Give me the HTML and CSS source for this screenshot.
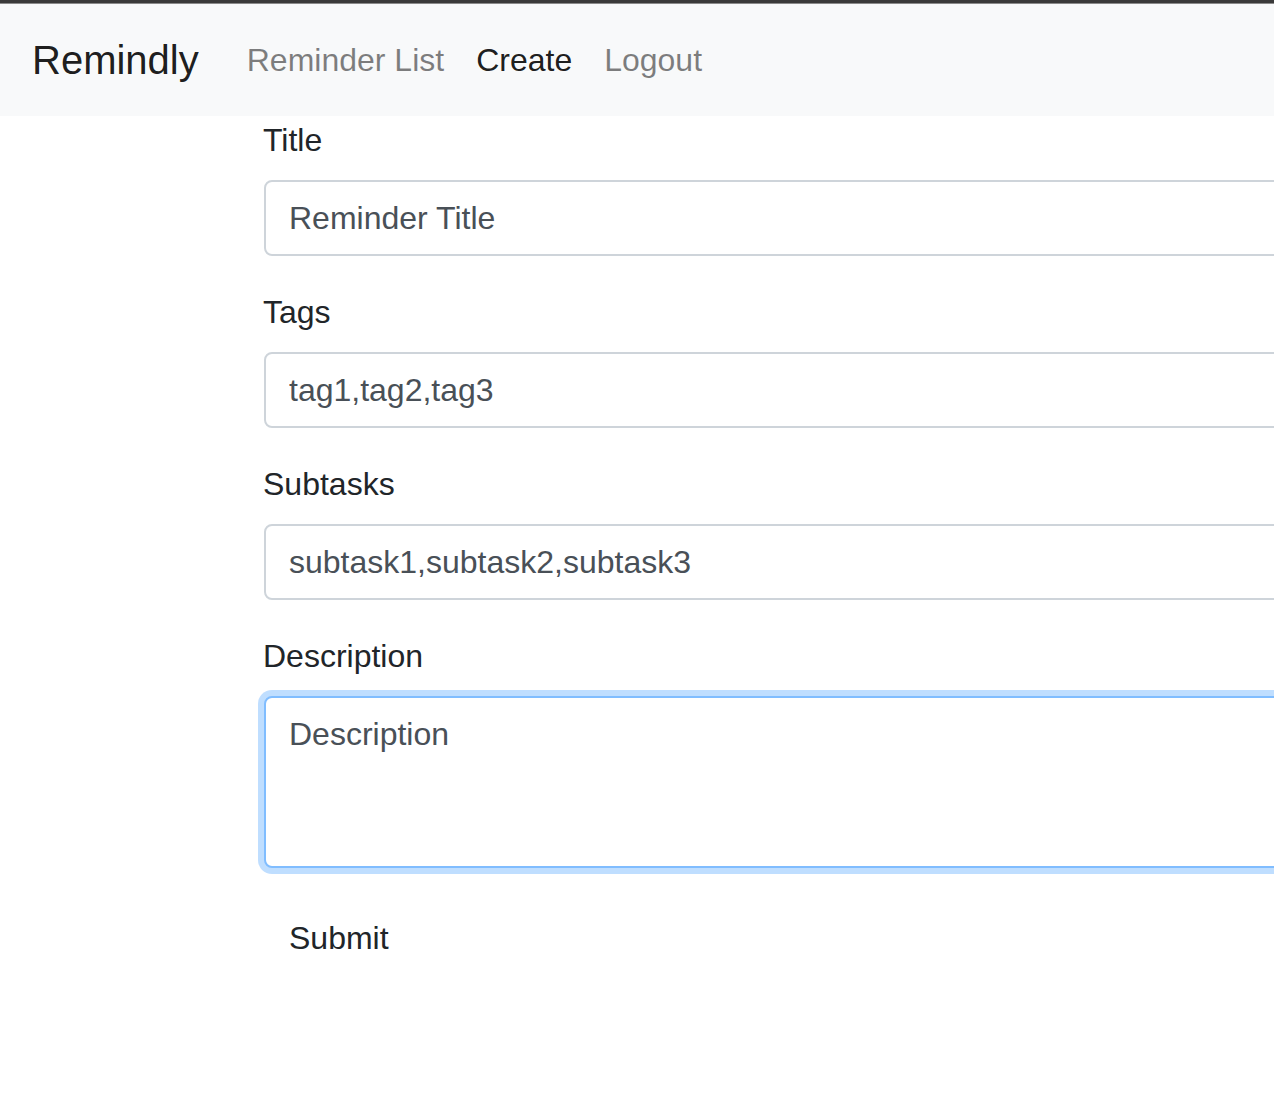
FILE: index.html
```html
<!DOCTYPE html>
<html lang="en">
<head>
<meta charset="utf-8">
<title>Remindly</title>
<link rel="stylesheet" href="styles.css">
</head>
<body>
<div class="topline"></div>
<nav class="navbar">
  <a class="brand" href="#">Remindly</a>
  <ul class="nav">
    <li><a class="nav-link" href="#">Reminder List</a></li>
    <li><a class="nav-link active" href="#">Create</a></li>
    <li><a class="nav-link" href="#">Logout</a></li>
  </ul>
</nav>
<main class="content">
  <form class="form">
    <div class="form-group">
      <label class="label" for="title">Title</label>
      <input class="control" id="title" type="text" placeholder="Reminder Title">
    </div>
    <div class="form-group">
      <label class="label" for="tags">Tags</label>
      <input class="control" id="tags" type="text" placeholder="tag1,tag2,tag3">
    </div>
    <div class="form-group">
      <label class="label" for="subtasks">Subtasks</label>
      <input class="control" id="subtasks" type="text" placeholder="subtask1,subtask2,subtask3">
    </div>
    <div class="form-group">
      <label class="label" for="desc">Description</label>
      <textarea class="control textarea focus" id="desc" rows="3" placeholder="Description"></textarea>
    </div>
    <button class="btn" type="button">Submit</button>
  </form>
</main>
</body>
</html>
```

FILE: styles.css
```css
* { box-sizing: border-box; }
html, body { margin: 0; padding: 0; overflow: hidden; }
body {
  font-family: "Liberation Sans", Arial, sans-serif;
  font-size: 32px;
  line-height: 1.5;
  color: #212529;
  background: #fff;
  width: 1274px;
  height: 1106px;
}
.topline {
  height: 4px;
  background: linear-gradient(#3a3a3a 0, #3a3a3a 75%, #8a8a8a 75%);
}
.navbar {
  display: flex;
  align-items: center;
  background: #f8f9fa;
  padding: 16px 32px;
  height: 112px;
}
.brand {
  font-size: 40px;
  line-height: 60px;
  padding: 10px 0;
  margin-right: 32px;
  color: rgba(0,0,0,.9);
  text-decoration: none;
}
.nav {
  display: flex;
  list-style: none;
  margin: 0;
  padding: 0;
}
.nav-link {
  display: block;
  padding: 16px;
  color: rgba(0,0,0,.5);
  text-decoration: none;
}
.nav-link.active { color: rgba(0,0,0,.9); }
.content {
  padding-left: 264px;
}
.form { width: 1100px; }
.form-group { margin-bottom: 32px; }
.label {
  display: inline-block;
  margin-bottom: 16px;
  margin-left: -1px;
}
.control {
  display: block;
  width: 100%;
  height: 76px;
  padding: 12px 24px 12px 23px;
  font-family: inherit;
  font-size: 32px;
  line-height: 1.5;
  color: #495057;
  background: #fff;
  border: 2px solid #ced4da;
  border-radius: 8px;
  outline: none;
}
.control::placeholder { color: #495057; opacity: 1; }
.textarea {
  height: 172px;
  resize: none;
  overflow: auto;
}
.focus {
  border-color: #80bdff;
  box-shadow: 0 0 0 6px rgba(0,123,255,.25);
}
.btn {
  display: inline-block;
  font-family: inherit;
  font-size: 32px;
  line-height: 1.5;
  padding: 12px 24px 12px 23px;
  color: #212529;
  background: transparent;
  border: 2px solid transparent;
  border-radius: 8px;
}
```
